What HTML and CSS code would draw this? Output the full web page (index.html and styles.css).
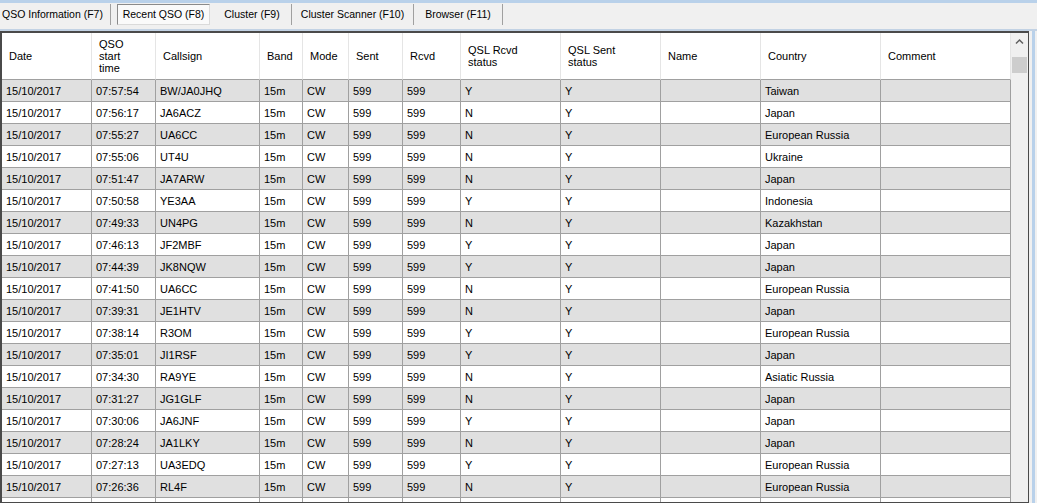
FILE: index.html
```html
<!DOCTYPE html>
<html lang="en">
<head>
    <meta charset="UTF-8">
    <meta name="viewport" content="width=device-width, initial-scale=1.0">
    <title>Recent QSO</title>
    <link rel="stylesheet" href="styles.css">
</head>
<body>
    <div class="tabs">
        <div class="tab first">QSO Information (F7)</div>
        <div class="tab active">Recent QSO (F8)</div>
        <div class="tab t-cluster">Cluster (F9)</div>
        <div class="tab t-scanner">Cluster Scanner (F10)</div>
        <div class="tab t-browser">Browser (F11)</div>
    </div>
    <div class="panel">
        <div class="grid">
            <table class="qso-table">
                <colgroup>
                    <col class="c-date">
                    <col class="c-time">
                    <col class="c-call">
                    <col class="c-band">
                    <col class="c-mode">
                    <col class="c-sent">
                    <col class="c-rcvd">
                    <col class="c-qslr">
                    <col class="c-qsls">
                    <col class="c-name">
                    <col class="c-country">
                    <col class="c-comment">
                </colgroup>
                <thead>
                    <tr>
                        <th>Date</th>
                        <th>QSO<br>start<br>time</th>
                        <th>Callsign</th>
                        <th>Band</th>
                        <th>Mode</th>
                        <th>Sent</th>
                        <th>Rcvd</th>
                        <th>QSL Rcvd<br>status</th>
                        <th>QSL Sent<br>status</th>
                        <th>Name</th>
                        <th>Country</th>
                        <th>Comment</th>
                    </tr>
                </thead>
                <tbody>
                    <tr><td>15/10/2017</td><td>07:57:54</td><td>BW/JA0JHQ</td><td>15m</td><td>CW</td><td>599</td><td>599</td><td>Y</td><td>Y</td><td></td><td>Taiwan</td><td></td></tr>
                    <tr><td>15/10/2017</td><td>07:56:17</td><td>JA6ACZ</td><td>15m</td><td>CW</td><td>599</td><td>599</td><td>N</td><td>Y</td><td></td><td>Japan</td><td></td></tr>
                    <tr><td>15/10/2017</td><td>07:55:27</td><td>UA6CC</td><td>15m</td><td>CW</td><td>599</td><td>599</td><td>N</td><td>Y</td><td></td><td>European Russia</td><td></td></tr>
                    <tr><td>15/10/2017</td><td>07:55:06</td><td>UT4U</td><td>15m</td><td>CW</td><td>599</td><td>599</td><td>N</td><td>Y</td><td></td><td>Ukraine</td><td></td></tr>
                    <tr><td>15/10/2017</td><td>07:51:47</td><td>JA7ARW</td><td>15m</td><td>CW</td><td>599</td><td>599</td><td>N</td><td>Y</td><td></td><td>Japan</td><td></td></tr>
                    <tr><td>15/10/2017</td><td>07:50:58</td><td>YE3AA</td><td>15m</td><td>CW</td><td>599</td><td>599</td><td>Y</td><td>Y</td><td></td><td>Indonesia</td><td></td></tr>
                    <tr><td>15/10/2017</td><td>07:49:33</td><td>UN4PG</td><td>15m</td><td>CW</td><td>599</td><td>599</td><td>N</td><td>Y</td><td></td><td>Kazakhstan</td><td></td></tr>
                    <tr><td>15/10/2017</td><td>07:46:13</td><td>JF2MBF</td><td>15m</td><td>CW</td><td>599</td><td>599</td><td>Y</td><td>Y</td><td></td><td>Japan</td><td></td></tr>
                    <tr><td>15/10/2017</td><td>07:44:39</td><td>JK8NQW</td><td>15m</td><td>CW</td><td>599</td><td>599</td><td>Y</td><td>Y</td><td></td><td>Japan</td><td></td></tr>
                    <tr><td>15/10/2017</td><td>07:41:50</td><td>UA6CC</td><td>15m</td><td>CW</td><td>599</td><td>599</td><td>N</td><td>Y</td><td></td><td>European Russia</td><td></td></tr>
                    <tr><td>15/10/2017</td><td>07:39:31</td><td>JE1HTV</td><td>15m</td><td>CW</td><td>599</td><td>599</td><td>N</td><td>Y</td><td></td><td>Japan</td><td></td></tr>
                    <tr><td>15/10/2017</td><td>07:38:14</td><td>R3OM</td><td>15m</td><td>CW</td><td>599</td><td>599</td><td>Y</td><td>Y</td><td></td><td>European Russia</td><td></td></tr>
                    <tr><td>15/10/2017</td><td>07:35:01</td><td>JI1RSF</td><td>15m</td><td>CW</td><td>599</td><td>599</td><td>Y</td><td>Y</td><td></td><td>Japan</td><td></td></tr>
                    <tr><td>15/10/2017</td><td>07:34:30</td><td>RA9YE</td><td>15m</td><td>CW</td><td>599</td><td>599</td><td>N</td><td>Y</td><td></td><td>Asiatic Russia</td><td></td></tr>
                    <tr><td>15/10/2017</td><td>07:31:27</td><td>JG1GLF</td><td>15m</td><td>CW</td><td>599</td><td>599</td><td>N</td><td>Y</td><td></td><td>Japan</td><td></td></tr>
                    <tr><td>15/10/2017</td><td>07:30:06</td><td>JA6JNF</td><td>15m</td><td>CW</td><td>599</td><td>599</td><td>Y</td><td>Y</td><td></td><td>Japan</td><td></td></tr>
                    <tr><td>15/10/2017</td><td>07:28:24</td><td>JA1LKY</td><td>15m</td><td>CW</td><td>599</td><td>599</td><td>N</td><td>Y</td><td></td><td>Japan</td><td></td></tr>
                    <tr><td>15/10/2017</td><td>07:27:13</td><td>UA3EDQ</td><td>15m</td><td>CW</td><td>599</td><td>599</td><td>Y</td><td>Y</td><td></td><td>European Russia</td><td></td></tr>
                    <tr><td>15/10/2017</td><td>07:26:36</td><td>RL4F</td><td>15m</td><td>CW</td><td>599</td><td>599</td><td>N</td><td>Y</td><td></td><td>European Russia</td><td></td></tr>
                    <tr><td></td><td></td><td></td><td></td><td></td><td></td><td></td><td></td><td></td><td></td><td></td><td></td></tr>
                </tbody>
            </table>
            <div class="vscroll">
                <div class="scroll-btn">
                    <svg width="17" height="17" viewBox="0 0 17 17">
                        <polyline points="5,10.5 8.5,7 12,10.5" fill="none" stroke="#606060" stroke-width="1.5"/>
                    </svg>
                </div>
                <div class="scroll-thumb"></div>
            </div>
        </div>
        <div class="edge"></div>
    </div>
</body>
</html>
```

FILE: styles.css
```css
html, body {
    height: 100%;
}
body {
    margin: 0;
    padding: 0;
    background: #f0f0f0;
    border-top: 3px solid #b9d1ea;
    box-sizing: border-box;
    font-family: "Liberation Sans", Arial, sans-serif;
    font-size: 11px;
    color: #000;
    overflow: hidden;
    display: flex;
    flex-direction: column;
}
.tabs {
    display: flex;
    height: 26px;
    flex-shrink: 0;
    font-size: 10.5px;
}
.tab {
    height: 21px;
    margin-top: 1px;
    line-height: 21px;
    text-align: center;
    border-right: 1px solid #a0a0a0;
    box-sizing: border-box;
    white-space: nowrap;
}
.tab.first {
    width: 111px;
    padding-left: 2px;
    text-align: left;
}
.tab.active {
    width: 93px;
    margin-left: 6px;
    background: #fafafa;
    border: 1px solid;
    border-color: #8a8a8a #dadada #dadada #8a8a8a;
    line-height: 19px;
}
.tab.t-cluster {
    width: 82px;
    padding-left: 3px;
}
.tab.t-scanner {
    width: 122px;
}
.tab.t-browser {
    width: 89px;
}
.panel {
    flex: 1;
    display: flex;
    border-top: 2px solid #c2d2e4;
    min-height: 0;
}
.grid {
    width: 1029px;
    box-sizing: border-box;
    border: 1px solid #4a4a4a;
    border-left-width: 2px;
    border-top-width: 2px;
    background: #fff;
    display: flex;
    overflow: hidden;
}
.edge {
    width: 3px;
    margin-left: 3px;
    background: #b9d1ea;
}
.qso-table {
    width: 1009px;
    table-layout: fixed;
    border-collapse: separate;
    border-spacing: 0;
    align-self: flex-start;
    flex-shrink: 0;
}
.c-date { width: 90px; }
.c-time { width: 64px; }
.c-call { width: 104px; }
.c-band { width: 43px; }
.c-mode { width: 46px; }
.c-sent { width: 54px; }
.c-rcvd { width: 58px; }
.c-qslr { width: 100px; }
.c-qsls { width: 100px; }
.c-name { width: 100px; }
.c-country { width: 120px; }
.c-comment { width: 130px; }
.qso-table th {
    height: 47px;
    padding: 0 0 0 7px;
    font-weight: normal;
    text-align: left;
    vertical-align: middle;
    line-height: 12px;
    border-right: 1px solid #e5e5e5;
    border-bottom: 1px solid #a0a0a0;
    box-sizing: border-box;
    overflow: hidden;
    white-space: nowrap;
}
.qso-table td {
    height: 22px;
    padding: 0 0 0 4px;
    border-right: 1px solid #a0a0a0;
    border-bottom: 1px solid #a0a0a0;
    box-sizing: border-box;
    white-space: nowrap;
    overflow: hidden;
}
.qso-table tbody tr:nth-child(odd) td {
    background: #e0e0e0;
}
.qso-table tbody tr:nth-child(even) td {
    background: #fff;
}
.vscroll {
    width: 17px;
    flex-shrink: 0;
    background: #f0f0f0;
    display: flex;
    flex-direction: column;
    align-items: center;
}
.scroll-btn {
    height: 17px;
}
.scroll-btn svg {
    display: block;
}
.scroll-thumb {
    width: 15px;
    height: 16px;
    margin-top: 7px;
    background: #cdcdcd;
}
```
